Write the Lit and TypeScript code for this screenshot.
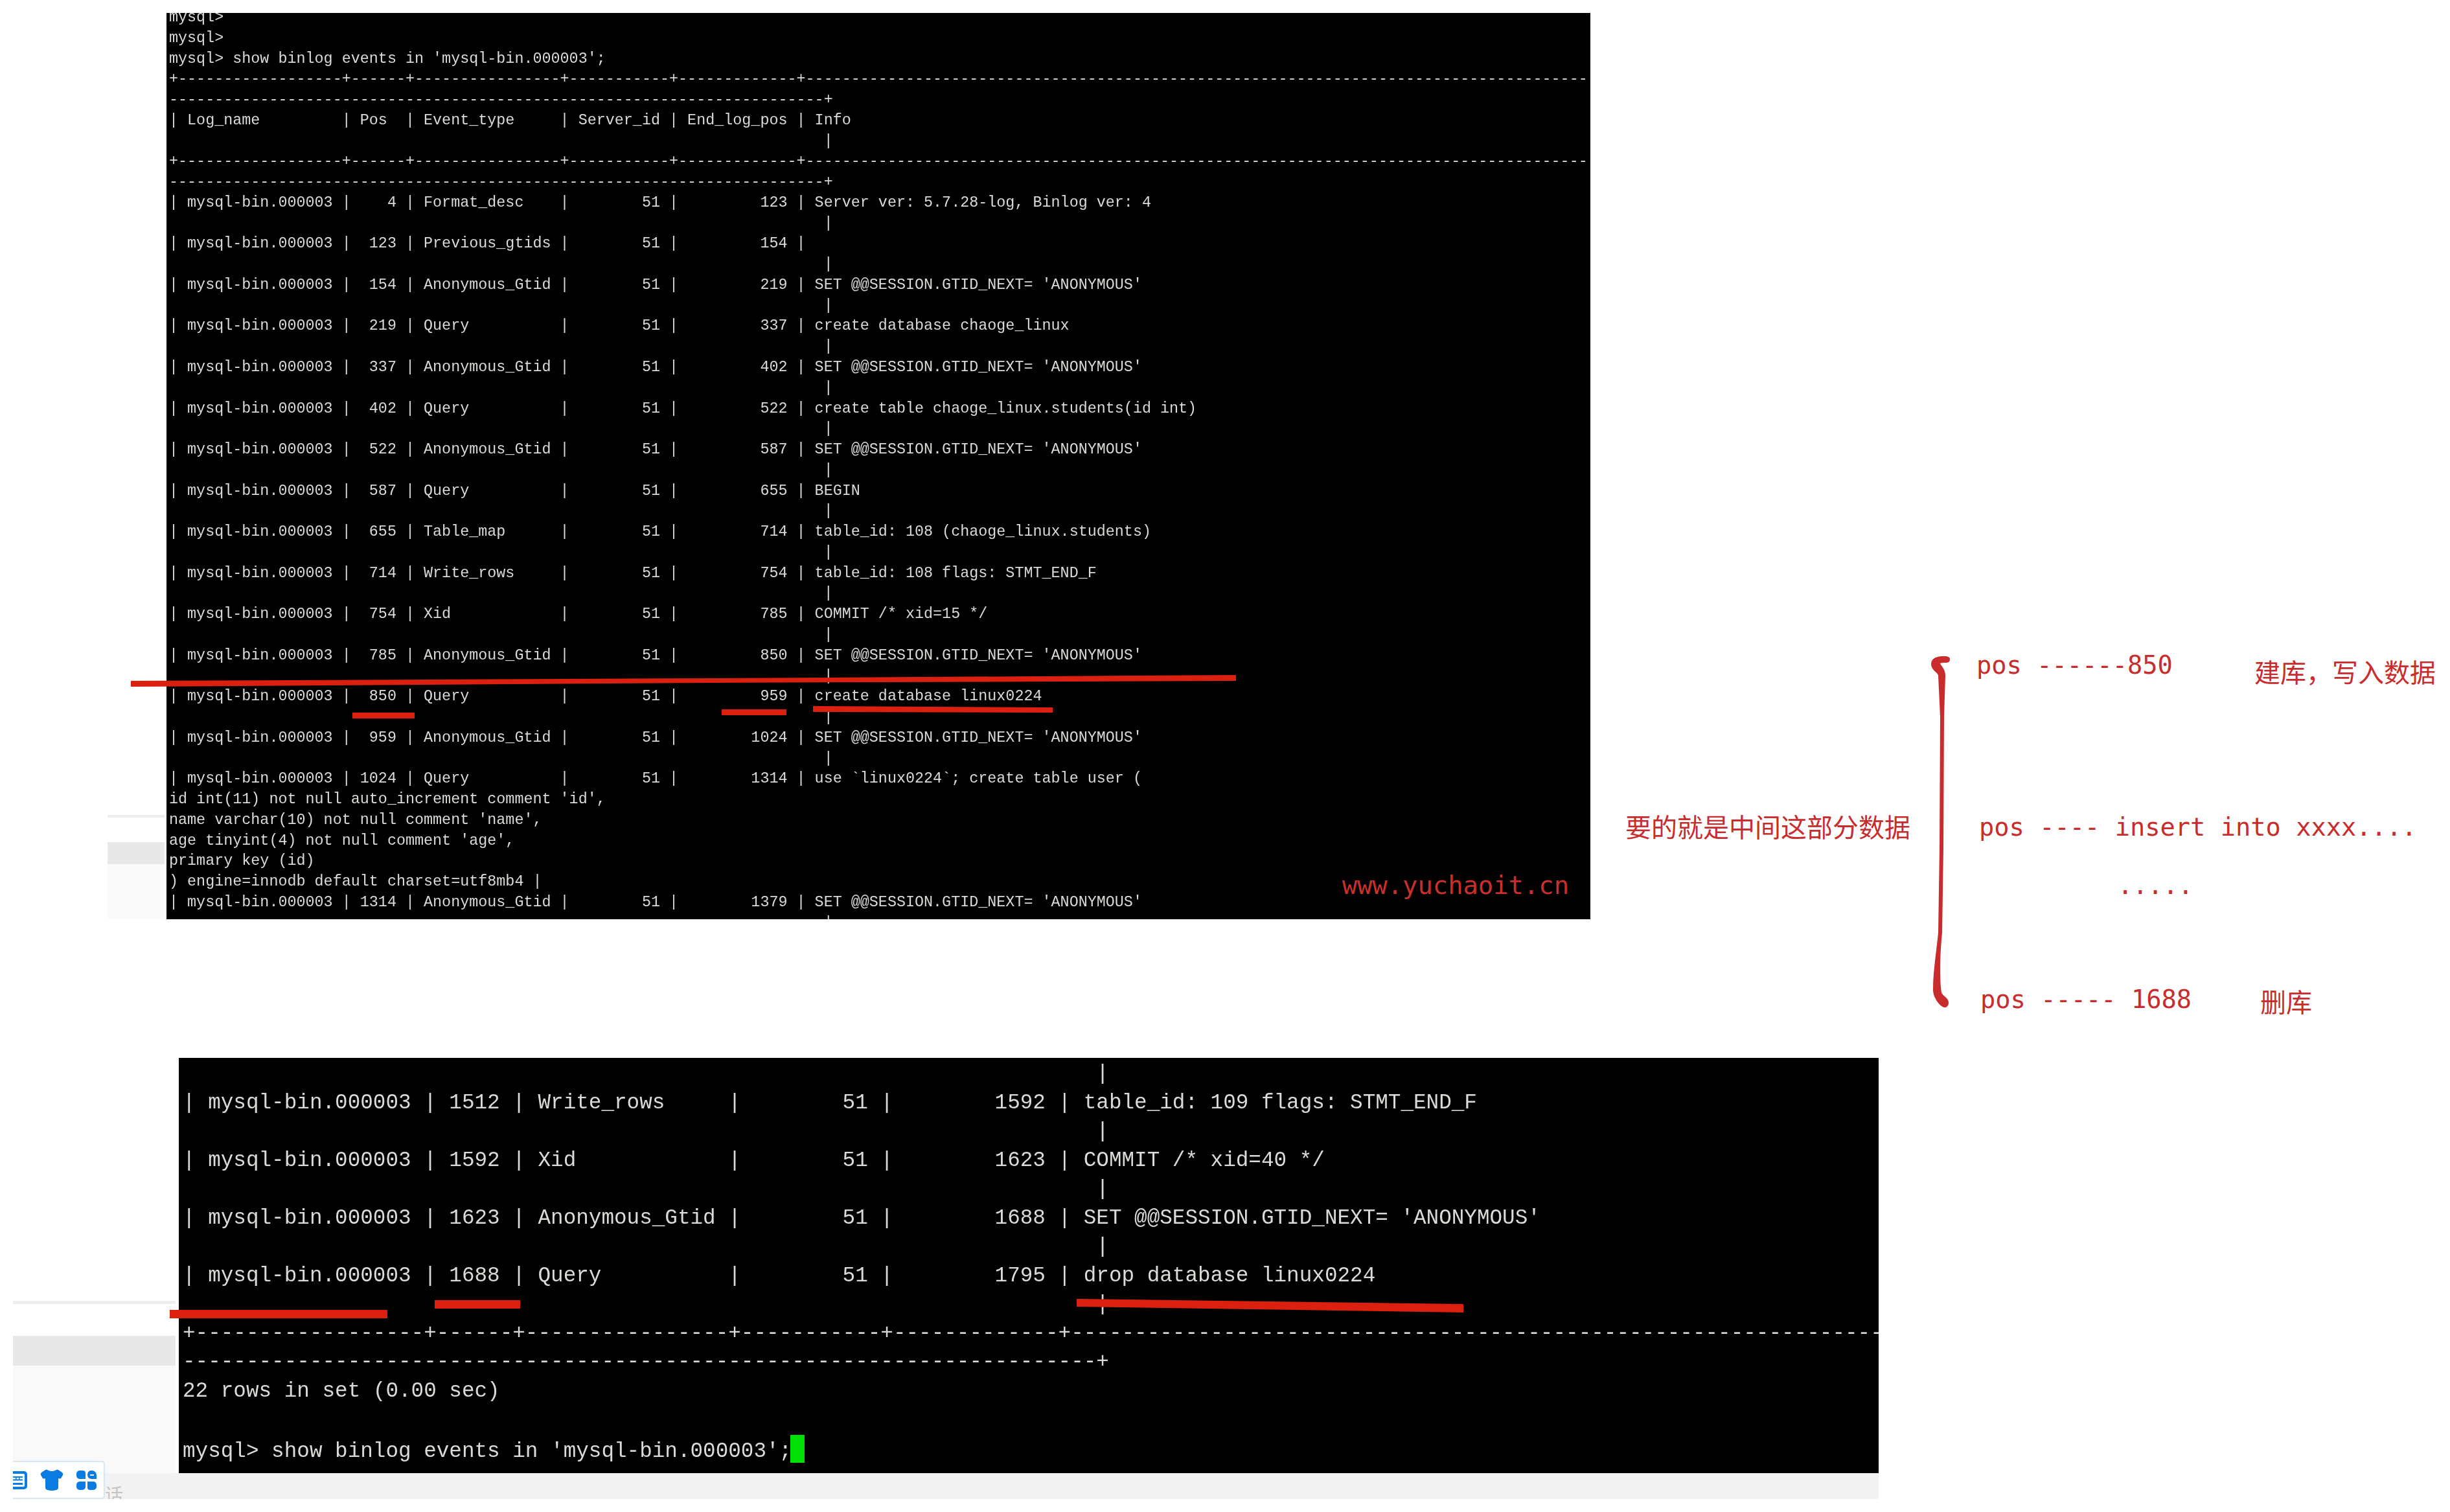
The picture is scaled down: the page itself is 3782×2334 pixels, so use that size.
import { LitElement, html, css, svg } from "lit";
import { customElement } from "lit/decorators.js";

const row = (pos: string, type: string, end: string, info = "") =>
  `| mysql-bin.000003 | ${pos.padStart(4)} | ${type.padEnd(14)} |        51 | ${end.padStart(11)} | ${info}`;
const wrapBar = " ".repeat(72) + "|";
const sepHead = "+------------------+------+----------------+-----------+-------------+";
const sep1 = (cols: number) => sepHead + "-".repeat(cols - sepHead.length);
const sep2 = "-".repeat(72) + "+";
const SET = "SET @@SESSION.GTID_NEXT= 'ANONYMOUS'";
const pair = (r: string) => [r, wrapBar];

const upper: string[] = [
  "mysql>",
  "mysql>",
  "mysql> show binlog events in 'mysql-bin.000003';",
  sep1(156),
  sep2,
  "| Log_name         | Pos  | Event_type     | Server_id | End_log_pos | Info",
  wrapBar,
  sep1(156),
  sep2,
  ...pair(row("4", "Format_desc", "123", "Server ver: 5.7.28-log, Binlog ver: 4")),
  ...pair(row("123", "Previous_gtids", "154")),
  ...pair(row("154", "Anonymous_Gtid", "219", SET)),
  ...pair(row("219", "Query", "337", "create database chaoge_linux")),
  ...pair(row("337", "Anonymous_Gtid", "402", SET)),
  ...pair(row("402", "Query", "522", "create table chaoge_linux.students(id int)")),
  ...pair(row("522", "Anonymous_Gtid", "587", SET)),
  ...pair(row("587", "Query", "655", "BEGIN")),
  ...pair(row("655", "Table_map", "714", "table_id: 108 (chaoge_linux.students)")),
  ...pair(row("714", "Write_rows", "754", "table_id: 108 flags: STMT_END_F")),
  ...pair(row("754", "Xid", "785", "COMMIT /* xid=15 */")),
  ...pair(row("785", "Anonymous_Gtid", "850", SET)),
  ...pair(row("850", "Query", "959", "create database linux0224")),
  ...pair(row("959", "Anonymous_Gtid", "1024", SET)),
  row("1024", "Query", "1314", "use `linux0224`; create table user ("),
  "id int(11) not null auto_increment comment 'id',",
  "name varchar(10) not null comment 'name',",
  "age tinyint(4) not null comment 'age',",
  "primary key (id)",
  ") engine=innodb default charset=utf8mb4 |",
  row("1314", "Anonymous_Gtid", "1379", SET),
  wrapBar,
];

const lower: string[] = [
  wrapBar,
  row("1512", "Write_rows", "1592", "table_id: 109 flags: STMT_END_F"),
  wrapBar,
  row("1592", "Xid", "1623", "COMMIT /* xid=40 */"),
  wrapBar,
  row("1623", "Anonymous_Gtid", "1688", SET),
  wrapBar,
  row("1688", "Query", "1795", "drop database linux0224"),
  wrapBar,
  sep1(134),
  sep2,
  "22 rows in set (0.00 sec)",
  "",
];

@customElement("app-root")
export class AppRoot extends LitElement {
  static styles = css`
    :host { display: block; }
    .page {
      position: relative; width: 3782px; height: 2334px; background: #fff; overflow: hidden;
    }
    .top { display: flex; height: 1633px; padding-top: 20px; box-sizing: border-box; align-items: flex-start; }
    .gutter-a {
      margin-left: 166px; margin-right: 3px; width: 88px; height: 1399px;
      display: flex; flex-direction: column; justify-content: flex-end;
    }
    .gutter-a .rule { height: 4px; background: #eeeeee; margin-bottom: 38px; }
    .gutter-a .band { height: 34px; background: #e8e8e8; }
    .gutter-a .tail { height: 85px; background: #fafafa; }

    .term { background: #000; color: #dadad6; overflow: hidden; flex: none; font-family: "Liberation Mono", monospace; }
    .term pre { margin: 0; font: inherit; white-space: pre; filter: blur(0.55px); }
    .term-a { width: 2198px; height: 1399px; position: relative; font-size: 23.4px; line-height: 31.77px; }
    .term-a pre { margin: -8px 0 0 4px; }
    .watermark {
      position: absolute; right: 33px; top: 1324px; color: #c9302c; line-height: 46px;
      font-family: "DejaVu Sans Mono", monospace; font-size: 38.8px;
    }

    .notes { display: flex; align-items: flex-start; margin-top: 990px; color: #c92c2c; }
    .cn { font-family: "Noto Sans CJK SC", sans-serif; font-size: 40px; line-height: 48px; white-space: nowrap; }
    .lead { margin-left: 54px; width: 440px; margin-top: 241px; }
    .brace { margin-left: 31px; flex: none; display: block; }
    .lines { margin-left: 39px; margin-top: -3px; font-family: "DejaVu Sans Mono", monospace; font-size: 38.7px; line-height: 40px; }
    .line { display: flex; align-items: center; height: 40px; white-space: pre; }
    .code { width: 429px; flex: none; }
    .l1 .cn { padding-top: 18px; }
    .l2 { margin-top: 210px; padding-left: 4px; }
    .l3 { margin-top: 50px; padding-left: 218px; }
    .l4 { margin-top: 136px; padding-left: 6px; }
    .l4 .code { width: 432px; }
    .l4 .cn { padding-top: 4px; }

    .bottom { margin-left: 20px; width: 2880px; }
    .bottom-row { display: flex; height: 641px; }
    .gutter-b { position: relative; width: 251px; margin-right: 5px; flex: none; display: flex; flex-direction: column; }
    .gutter-b .blank { height: 375px; }
    .gutter-b .rule { height: 5px; background: #eeeeee; margin-bottom: 49px; }
    .gutter-b .band { height: 46px; background: #e8e8e8; }
    .gutter-b .tail { flex: 1; background: #f9f9f9; }
    .term-b { width: 2624px; height: 641px; font-size: 32.65px; line-height: 44.55px; }
    .term-b pre { margin: 3px 0 0 6px; }
    .cursor { display: inline-block; width: 22px; height: 43px; background: #00e000; vertical-align: -9px; margin-left: -2px; }
    .strip { height: 40px; background: #f2f2f2; position: relative; }
    .strip-note {
      position: absolute; left: 142px; top: 17px; height: 23px; overflow: hidden; color: #c4c4c4;
      font-family: "Noto Sans CJK SC", sans-serif; font-size: 28px; line-height: 30px;
    }
    .tray {
      position: absolute; left: 0; top: 622px; width: 142px; height: 59px; box-sizing: border-box;
      background: #fff; border: 2px solid #d8e6f2; border-left: 0; border-radius: 0 5px 5px 0;
      display: flex; align-items: center; gap: 20px; z-index: 1;
    }
    .overlay { position: absolute; left: 0; top: 0; pointer-events: none; }
  `;

  private marks() {
    return svg`
      <svg class="overlay" width="3782" height="2334" viewBox="0 0 3782 2334" fill="#dc2010">
        <polygon points="202,1051 1100,1047 1908,1042 1908,1051 1100,1054 202,1060"></polygon>
        <rect x="544" y="1100" width="96" height="9"></rect>
        <rect x="1114" y="1095" width="100" height="9"></rect>
        <polygon points="1255,1090 1625,1092 1625,1100 1255,1099"></polygon>
        <rect x="262" y="2022" width="336" height="13"></rect>
        <rect x="671" y="2007" width="132" height="13"></rect>
        <polygon points="1662,2005 2259,2013 2259,2026 1662,2017"></polygon>
      </svg>
    `;
  }

  render() {
    return html`
      <div class="page">
        <section class="top">
          <div class="gutter-a">
            <div class="rule"></div><div class="band"></div><div class="tail"></div>
          </div>
          <div class="term term-a">
            <pre>${upper.join("\n")}</pre>
            <div class="watermark">www.yuchaoit.cn</div>
          </div>
          <div class="notes">
            <div class="cn lead">要的就是中间这部分数据</div>
            <svg class="brace" width="32" height="550" viewBox="0 0 32 550" fill="#c92c2c">
              <path d="M30 8 C30 12 27 13 24 13 C20 13 16 13 15 14 C16 18 23 22 23 33 L21 97 L20 300 L18 430 C16 450 15 470 15 483 C15 505 16 515 17 522 C19 528 28 530 28 538 C28 543 24 546 21 545 C14 543 4 530 4 518 C4 490 9 460 12 430 L14 300 L15 97 L12 33 C12 28 1 25 1 15 C1 6 10 3 20 3 C25 3 30 3 30 8 Z"></path>
            </svg>
            <div class="lines">
              <div class="line l1"><span class="code">pos ------850</span><span class="cn">建库，写入数据</span></div>
              <div class="line l2"><span>pos ---- insert into xxxx....</span></div>
              <div class="line l3"><span>.....</span></div>
              <div class="line l4"><span class="code">pos ----- 1688</span><span class="cn">删库</span></div>
            </div>
          </div>
        </section>
        <section class="bottom">
          <div class="bottom-row">
            <div class="gutter-b">
              <div class="blank"></div>
              <div class="rule"></div><div class="band"></div><div class="tail"></div>
              <div class="tray">
                <svg width="22" height="28" viewBox="0 0 22 28" fill="#0a7be0">
                  <path d="M0 0h17a5 5 0 0 1 5 5v18a5 5 0 0 1-5 5H0z"></path>
                  <path fill="#fff" d="M0 4h16a2 2 0 0 1 2 2v16a2 2 0 0 1-2 2H0z"></path>
                  <path d="M0 8h15v2H0zM0 12.500h15v2H0zM0 18h15v3H0zM4 8h1.500v6H4zM9 8h1.500v6H9z"></path>
                </svg>
                <svg width="36" height="33" viewBox="0 0 36 33" fill="#0a7be0">
                  <path d="M11 1 Q18 5 25 1 Q26 0 28 1 L34 5 Q36 7 35 9 L32 14 Q31 15 28 14 V29 Q28 31 25 32 Q18 34 11 32 Q8 31 8 29 V14 Q5 15 4 14 L1 9 Q0 7 2 5 L8 1 Q10 0 11 1z"></path>
                </svg>
                <svg width="31" height="30" viewBox="0 0 31 30" fill="#0a7be0">
                  <path d="M5 0h5a4 4 0 0 1 4 4v9H5a5 5 0 0 1-5-5V5a5 5 0 0 1 5-5z"></path>
                  <path fill-rule="evenodd" d="M24 0a7 7 0 0 1 7 7v6H23a6 6 0 0 1-6-6V6a6 6 0 0 1 7-6z M21 6h6v2h-6z"></path>
                  <path d="M14 17v8a5 5 0 0 1-5 5H5a5 5 0 0 1-5-5v-3a5 5 0 0 1 5-5z"></path>
                  <path d="M17 17h9a5 5 0 0 1 5 5v3a5 5 0 0 1-5 5h-5a4 4 0 0 1-4-4z"></path>
                </svg>
              </div>
            </div>
            <div class="term term-b">
              <pre>${lower.join("\n")}
mysql> show binlog events in 'mysql-bin.000003';<span class="cursor"></span></pre>
            </div>
          </div>
          <div class="strip"><span class="strip-note">话</span></div>
        </section>
        ${this.marks()}
      </div>
    `;
  }
}
